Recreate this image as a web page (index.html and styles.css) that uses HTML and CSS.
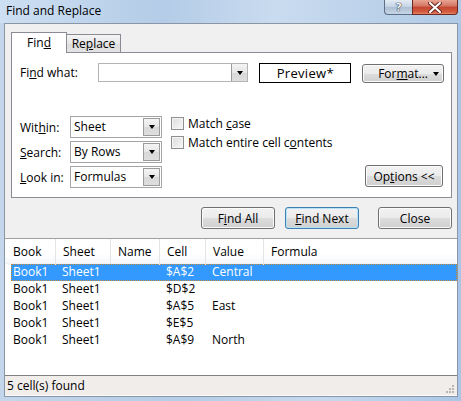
FILE: index.html
```html
<!DOCTYPE html>
<html lang="en">
<head>
  <meta charset="UTF-8">
  <title>Find and Replace</title>
  <link rel="stylesheet" href="styles.css">
</head>
<body>
<div class="window">
  <!-- Title bar -->
  <div class="titlebar">
    <span class="title">Find and Replace</span>
    <div class="caption-buttons">
      <span class="cap-btn cap-help"><span class="help-mark">?</span></span>
      <span class="cap-btn cap-close">
        <svg width="14" height="11" viewBox="0 0 14 11">
          <path d="M2 1 L12 10 M12 1 L2 10" stroke="#6b2a20" stroke-width="4" stroke-linecap="round"/>
          <path d="M2 1 L12 10 M12 1 L2 10" stroke="#ffffff" stroke-width="2" stroke-linecap="round"/>
        </svg>
      </span>
    </div>
  </div>

  <div class="client">
    <!-- Tabs -->
    <div class="tabs">
      <div class="tab tab-active">Fin<u>d</u></div>
      <div class="tab">Re<u>p</u>lace</div>
    </div>

    <div class="panel">
      <div class="row-find">
        <label class="lbl-what">Fi<u>n</u>d what:</label>
        <div class="combo combo-what">
          <span class="combo-text"></span>
          <span class="arrow-btn"><i class="arrow"></i></span>
        </div>
        <div class="preview">Preview*</div>
        <button class="btn btn-format"><span>For<u>m</u>at...</span><i class="arrow"></i></button>
      </div>

      <div class="row-options">
        <div class="opt-grid">
          <label>Wit<u>h</u>in:</label>
          <div class="combo"><span class="combo-text">Sheet</span><span class="arrow-btn"><i class="arrow"></i></span></div>
          <label><u>S</u>earch:</label>
          <div class="combo"><span class="combo-text">By Rows</span><span class="arrow-btn"><i class="arrow"></i></span></div>
          <label><u>L</u>ook in:</label>
          <div class="combo"><span class="combo-text">Formulas</span><span class="arrow-btn"><i class="arrow"></i></span></div>
        </div>
        <div class="checks">
          <div class="check"><span class="box"></span><span>Match <u>c</u>ase</span></div>
          <div class="check"><span class="box"></span><span>Match entire cell c<u>o</u>ntents</span></div>
        </div>
        <button class="btn btn-options">Op<u>t</u>ions &lt;&lt;</button>
      </div>
    </div>

    <!-- Action buttons -->
    <div class="actions">
      <button class="btn">F<u>i</u>nd All</button>
      <button class="btn btn-default"><u>F</u>ind Next</button>
      <button class="btn btn-close">Close</button>
    </div>

    <!-- Results list -->
    <div class="results">
      <div class="list-header">
        <span>Book</span><span>Sheet</span><span>Name</span><span>Cell</span><span>Value</span><span>Formula</span>
      </div>
      <div class="list-row selected">
        <span>Book1</span><span>Sheet1</span><span></span><span>$A$2</span><span>Central</span><span></span>
      </div>
      <div class="list-row">
        <span>Book1</span><span>Sheet1</span><span></span><span>$D$2</span><span></span><span></span>
      </div>
      <div class="list-row">
        <span>Book1</span><span>Sheet1</span><span></span><span>$A$5</span><span>East</span><span></span>
      </div>
      <div class="list-row">
        <span>Book1</span><span>Sheet1</span><span></span><span>$E$5</span><span></span><span></span>
      </div>
      <div class="list-row">
        <span>Book1</span><span>Sheet1</span><span></span><span>$A$9</span><span>North</span><span></span>
      </div>
    </div>

    <div class="status">
      <span>5 cell(s) found</span>
      <svg class="grip" width="9" height="9" viewBox="0 0 9 9">
        <rect x="6" y="0" width="2" height="2" fill="#b8b8b8"/>
        <rect x="3" y="3" width="2" height="2" fill="#b8b8b8"/>
        <rect x="6" y="3" width="2" height="2" fill="#b8b8b8"/>
        <rect x="0" y="6" width="2" height="2" fill="#b8b8b8"/>
        <rect x="3" y="6" width="2" height="2" fill="#b8b8b8"/>
        <rect x="6" y="6" width="2" height="2" fill="#b8b8b8"/>
      </svg>
    </div>
  </div>
</div>
</body>
</html>
```

FILE: styles.css
```css
* {
  box-sizing: border-box;
}
body {
  margin: 0;
  font-family: "Open Sans", "Noto Sans", sans-serif;
  font-size: 12px;
  color: #000;
}
.window {
  width: 461px;
  height: 401px;
  display: flex;
  flex-direction: column;
  background: linear-gradient(to right, #c3d6eb, #b6cde7 40%, #c7d9ee 70%, #aac6e6);
  overflow: hidden;
}

/* title bar */
.titlebar {
  height: 23px;
  display: flex;
  justify-content: space-between;
  align-items: flex-start;
  background: linear-gradient(to right, #cddff2, #b4cce7 35%, #c9dbef 60%, #b0cae6);
}
.title {
  padding: 2px 0 0 6px;
  line-height: 17px;
}
.caption-buttons {
  display: flex;
  margin-right: 3px;
}
.cap-btn {
  height: 15px;
  display: flex;
  align-items: center;
  justify-content: center;
  border: 1px solid #5c6f86;
  border-top: none;
}
.cap-help {
  width: 28px;
  border-right: none;
  border-radius: 0 0 0 4px;
  background: linear-gradient(#e4ecf5, #c3d3e4 50%, #aebfd3 51%, #c6d5e5);
}
.help-mark {
  color: #fff;
  font-weight: bold;
  font-size: 11px;
  line-height: 14px;
  text-shadow: 0 0 1px #2d3c4e, 0 0 1px #2d3c4e, 0 0 1px #2d3c4e;
}
.cap-close {
  width: 46px;
  border-color: #6a2a22;
  border-radius: 0 0 4px 0;
  background: linear-gradient(#e8a493, #d27360 45%, #c2462f 50%, #d35a3f 85%, #e9866a);
}

/* client area */
.client {
  height: 374px;
  margin: 0 3px 0 4px;
  border: 1px solid #8896a6;
  background: #f0f0f0;
  display: flex;
  flex-direction: column;
}
.tabs {
  display: flex;
  align-items: flex-end;
  height: 28px;
  padding: 8px 0 0 6px;
}
.tab {
  height: 18px;
  width: 54px;
  border: 1px solid #898c95;
  border-bottom: none;
  border-left: none;
  background: linear-gradient(#f5f5f5, #e6e6e6 50%, #dcdcdc 51%, #e3e3e3);
  text-align: center;
  line-height: 17px;
}
.tab-active {
  height: 21px;
  width: 56px;
  margin-bottom: -1px;
  border-left: 1px solid #898c95;
  border-right: 1px solid #898c95;
  background: #fff;
  position: relative;
  z-index: 1;
  line-height: 19px;
}
.panel {
  height: 146px;
  margin: 0 5px 0 6px;
  border: 1px solid #898c95;
  background: #fff;
  padding: 10px 7px 9px 8px;
  display: flex;
  flex-direction: column;
}
.row-find {
  display: flex;
  align-items: flex-start;
  height: 20px;
}
.lbl-what {
  width: 78px;
  line-height: 19px;
}
.combo {
  display: flex;
  border: 1px solid #a5a5a5;
  background: #fff;
  height: 22px;
  width: 92px;
}
.combo-what {
  width: 151px;
  height: 19px;
  border-color: #b4b4b4;
}
.combo-text {
  flex: 1;
  padding-left: 3px;
  line-height: 20px;
}
.arrow-btn {
  width: 17px;
  margin: 1px;
  border: 1px solid #9c9c9c;
  background: linear-gradient(#f4f4f4, #e6e6e6 50%, #d8d8d8 51%, #dedede);
  display: flex;
  align-items: center;
  justify-content: center;
}
.combo-what .arrow-btn {
  margin: 0;
  width: 16px;
  border-top: none;
  border-bottom: none;
  border-right: none;
}
.arrow {
  display: inline-block;
  width: 0;
  height: 0;
  border-top: 4px solid #000;
  border-left: 3.5px solid transparent;
  border-right: 3.5px solid transparent;
}
.preview {
  width: 92px;
  height: 20px;
  margin-left: 11px;
  border: 1px solid #000;
  text-align: center;
  font-size: 13px;
  line-height: 18px;
  letter-spacing: 0.3px;
}

/* buttons */
.btn {
  font-family: inherit;
  font-size: 12px;
  color: #000;
  padding: 0;
  border: 1px solid #707070;
  border-radius: 3px;
  background: linear-gradient(#f2f2f2, #ebebeb 50%, #dddddd 51%, #cfcfcf);
  box-shadow: inset 0 0 0 1px #fbfbfb;
  height: 22px;
}
.btn-format {
  width: 82px;
  height: 19px;
  margin-left: 11px;
  margin-top: 1px;
  display: flex;
  align-items: center;
  justify-content: space-between;
  padding: 0 4px 0 15px;
  line-height: 15px;
}
.btn-options {
  width: 78px;
  margin-left: auto;
  margin-right: 1px;
  margin-bottom: 1px;
}

.row-options {
  margin-top: auto;
  display: flex;
  align-items: flex-end;
}
.opt-grid {
  display: grid;
  grid-template-columns: 50px 92px;
  row-gap: 3px;
  align-items: center;
}
.checks {
  align-self: flex-start;
  margin-left: 9px;
  padding-top: 1px;
  display: flex;
  flex-direction: column;
  gap: 6px;
}
.check {
  display: flex;
  align-items: center;
  gap: 4px;
  height: 13px;
  line-height: 13px;
}
.box {
  width: 13px;
  height: 13px;
  border: 1px solid #8e8f8f;
  background: linear-gradient(135deg, #dcdcdc, #f8f8f8);
  box-shadow: inset 0 0 0 1px #f4f4f4;
}

.actions {
  display: flex;
  justify-content: flex-end;
  padding: 9px 5px 0 0;
  height: 40px;
}
.actions .btn {
  width: 74px;
  margin-left: 10px;
}
.actions .btn-close {
  margin-left: 19px;
}
.actions .btn-default {
  border-color: #3c7fb1;
  box-shadow: inset 0 0 0 1px #b6e2f8;
}

/* results */
.results {
  flex: 1;
  background: #fff;
  border-top: 1px solid #a0a0a0;
  border-bottom: 1px solid #828282;
}
.list-header {
  display: grid;
  grid-template-columns: 50px 55px 49px 46px 58px 1fr;
  height: 25px;
  margin-right: 1px;
  background: linear-gradient(#ffffff, #ffffff 60%, #f6f7f9);
  border-bottom: 1px solid #f0f1f3;
}
.list-header span {
  padding-left: 7px;
  line-height: 26px;
  border-left: 1px solid #e3e5e8;
}
.list-header span:first-child {
  padding-left: 8px;
  border-left: none;
}
.list-row {
  display: grid;
  grid-template-columns: 49px 55px 49px 46px 58px 1fr;
  height: 17px;
  margin-left: 6px;
  padding-left: 2px;
  line-height: 16px;
}
.list-row.selected {
  background: #3399ff;
  color: #fff;
  outline: 1px dotted #c98a3c;
  outline-offset: -1px;
}

.status {
  height: 20px;
  display: flex;
  align-items: center;
  justify-content: space-between;
  padding: 0 2px 0 2px;
  background: #f0edeb;
  border-bottom: 1px solid #fbfbfb;
}
.grip {
  align-self: flex-end;
  margin-bottom: 1px;
}
```
